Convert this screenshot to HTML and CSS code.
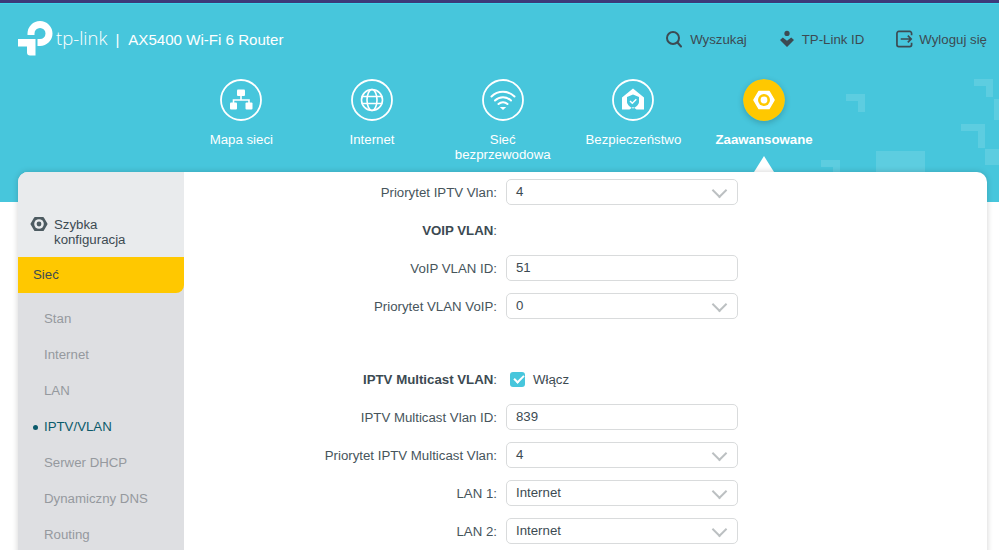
FILE: index.html
```html
<!DOCTYPE html>
<html lang="pl">
<head>
    <meta charset="UTF-8">
    <meta name="viewport" content="width=device-width, initial-scale=1.0">
    <title>AX5400 Wi-Fi 6 Router</title>
    <link rel="stylesheet" href="styles.css">
</head>
<body>
    <div class="page">
        <header class="header">
            <svg class="pixels" width="999" height="199" viewBox="0 3 999 199">
                <path d="M846 94h19v18h-7v-11h-12z"/>
                <path d="M974 79h19v18h-7v-11h-12z"/>
                <path d="M961 124h24v24h-7v-17h-17z"/>
                <path d="M994 99h5v21h-5z"/>
                <path d="M985 149h14v16h-14z"/>
                <path d="M876 151h49v21h-49z"/>
                <path d="M821 160h19v12h-7v-5h-12z"/>
            </svg>

            <div class="topline">
                <div class="brand">
                    <svg class="logo" width="35" height="35" viewBox="0 0 35 35">
                        <path d="M13 14V12.500A9 9 0 1 1 22 21.500H19.500" fill="none" stroke="#fff" stroke-width="7"/>
                        <path d="M0 18H17.500V34.500H12a3 3 0 0 1-3-3V25.500H0z" fill="#fff"/>
                    </svg>
                    <span class="brand-name">tp-link</span>
                    <span class="brand-sep">|</span>
                    <span class="brand-model">AX5400 Wi-Fi 6 Router</span>
                </div>
                <div class="actions">
                    <a class="action action-search">
                        <svg width="16" height="18" viewBox="0 0 16 18" fill="none" stroke="#3c4a52" stroke-width="2">
                            <circle cx="7" cy="8" r="6"/>
                            <path d="M11.500 12.500l3.500 4" stroke-linecap="round"/>
                        </svg>
                        Wyszukaj
                    </a>
                    <a class="action action-id">
                        <svg width="14" height="18" viewBox="0 0 15 18" fill="#3c4a52">
                            <circle cx="7.500" cy="3" r="2.800"/>
                            <path d="M0 10l3-2.500 4.500 3.500L12 7.500l3 2.500-7.500 7.500z"/>
                        </svg>
                        TP-Link ID
                    </a>
                    <a class="action action-logout">
                        <svg width="17" height="18" viewBox="0 0 18 18" fill="none" stroke="#3c4a52" stroke-width="1.800">
                            <path d="M16.500 5V3a2 2 0 0 0-2-2H3a2 2 0 0 0-2 2v12a2 2 0 0 0 2 2h11.500a2 2 0 0 0 2-2v-2"/>
                            <path d="M5 9h11M12.500 5.500L16 9l-3.500 3.500"/>
                        </svg>
                        Wyloguj się
                    </a>
                </div>
            </div>

            <nav class="nav">
                <a class="nav-item">
                    <svg class="nav-icon" width="42" height="42" viewBox="0 0 42 42">
                        <circle class="ring" cx="21" cy="21" r="20"/>
                        <path class="line" d="M21 16v5M13.500 24v-3h15.500v3"/>
                        <rect class="solid" x="17" y="10.500" width="8" height="6.500" rx="1"/>
                        <rect class="solid" x="10" y="23.500" width="7" height="7" rx="1"/>
                        <rect class="solid" x="25.500" y="23.500" width="7" height="7" rx="1"/>
                    </svg>
                    <span class="nav-label">Mapa sieci</span>
                </a>
                <a class="nav-item">
                    <svg class="nav-icon" width="42" height="42" viewBox="0 0 42 42">
                        <circle class="ring" cx="21" cy="21" r="20"/>
                        <circle class="line" cx="21" cy="21" r="10.500"/>
                        <ellipse class="line" cx="21" cy="21" rx="5" ry="10.500"/>
                        <path class="line" d="M10.500 17.500h21M10.500 24.500h21"/>
                    </svg>
                    <span class="nav-label">Internet</span>
                </a>
                <a class="nav-item">
                    <svg class="nav-icon" width="42" height="42" viewBox="0 0 42 42">
                        <circle class="ring" cx="21" cy="21" r="20"/>
                        <path class="line line-round" d="M9.500 17.500a16.500 16.500 0 0 1 23 0M13 21.500a11.500 11.500 0 0 1 16 0M16.500 25a6.500 6.500 0 0 1 9 0"/>
                        <path class="solid" d="M17.800 28h6.400L21 31z"/>
                    </svg>
                    <span class="nav-label">Sieć bezprzewodowa</span>
                </a>
                <a class="nav-item">
                    <svg class="nav-icon" width="42" height="42" viewBox="0 0 42 42">
                        <circle class="ring" cx="21" cy="21" r="20"/>
                        <path class="solid" fill-rule="evenodd" d="M21 9.500L32 18.500v12h-7.500L21 28l-3.500 2.500H10v-12zM15 18v5c0 2.500 3 5 6 6.500 3-1.500 6-4 6-6.500v-5l-6-2.500z"/>
                        <path class="check" d="M18 22l2.300 2.300 4-4"/>
                    </svg>
                    <span class="nav-label">Bezpieczeństwo</span>
                </a>
                <a class="nav-item nav-item-active">
                    <svg class="nav-icon" width="42" height="42" viewBox="0 0 42 42">
                        <circle class="disc" cx="21" cy="21" r="21"/>
                        <circle class="solid" cx="21" cy="21" r="9"/>
                        <path class="solid knob" d="M11 21L16 12.500H26L31 21L26 29.500H16Z"/>
                        <circle class="hole" cx="21" cy="21" r="6"/>
                        <circle class="solid" cx="21" cy="21" r="3.400"/>
                    </svg>
                    <span class="nav-label">Zaawansowane</span>
                </a>
            </nav>
        </header>

        <main class="card">
            <aside class="sidebar">
                <div class="quick">
                    <svg width="18" height="18" viewBox="0 0 18 18">
                        <path d="M1.500 9L5 3H13L16.500 9L13 15H5Z" fill="#4d5b61" stroke="#4d5b61" stroke-width="2" stroke-linejoin="round"/>
                        <circle cx="9" cy="9" r="4.800" fill="#e9ebed"/>
                        <circle cx="9" cy="9" r="2.400" fill="#4d5b61"/>
                    </svg>
                    <span>Szybka konfiguracja</span>
                </div>
                <div class="section-active">Sieć</div>
                <ul class="menu">
                    <li>Stan</li>
                    <li>Internet</li>
                    <li>LAN</li>
                    <li class="menu-current">IPTV/VLAN</li>
                    <li>Serwer DHCP</li>
                    <li>Dynamiczny DNS</li>
                    <li>Routing</li>
                </ul>
            </aside>

            <section class="form">
                <div class="row">
                    <label>Priorytet IPTV Vlan:</label>
                    <div class="field select">4</div>
                </div>
                <div class="row">
                    <label><strong>VOIP VLAN</strong>:</label>
                </div>
                <div class="row">
                    <label>VoIP VLAN ID:</label>
                    <div class="field">51</div>
                </div>
                <div class="row">
                    <label>Priorytet VLAN VoIP:</label>
                    <div class="field select">0</div>
                </div>
                <div class="row row-spaced">
                    <label><strong>IPTV Multicast VLAN</strong>:</label>
                    <div class="toggle">
                        <span class="checkbox"></span>
                        Włącz
                    </div>
                </div>
                <div class="row">
                    <label>IPTV Multicast Vlan ID:</label>
                    <div class="field">839</div>
                </div>
                <div class="row">
                    <label>Priorytet IPTV Multicast Vlan:</label>
                    <div class="field select">4</div>
                </div>
                <div class="row">
                    <label>LAN 1:</label>
                    <div class="field select">Internet</div>
                </div>
                <div class="row">
                    <label>LAN 2:</label>
                    <div class="field select">Internet</div>
                </div>
            </section>
        </main>
    </div>
</body>
</html>
```

FILE: styles.css
```css
:root {
    --teal: #47c6dc;
    --yellow: #ffc800;
    --text: #46545b;
    --dark: #3c4a52;
    --border: #d9dbdc;
}

* {
    margin: 0;
    padding: 0;
    box-sizing: border-box;
}

html, body {
    height: 100%;
    overflow: hidden;
}

body {
    font-family: "Liberation Sans", Arial, sans-serif;
    font-size: 13.25px;
    color: var(--text);
    background-color: #fff;
}

.page {
    height: 550px;
    overflow: hidden;
}

/* Header */
.header {
    position: relative;
    height: 202px;
    padding-top: 3px;
    background-color: var(--teal);
    border-top: 3px solid #3d3a7a;
    box-shadow: inset 0 1px 0 #3fd6ec;
}

.pixels {
    position: absolute;
    top: 0;
    left: 0;
    fill: rgba(255, 255, 255, 0.12);
}

.topline {
    position: relative;
    display: flex;
    justify-content: space-between;
    align-items: center;
    height: 56px;
    padding: 0 12px 0 18px;
    margin-top: 5px;
}

.brand {
    display: flex;
    align-items: center;
    color: #fff;
}

.logo {
    margin-bottom: 2px;
}

.brand-name {
    margin-left: 3px;
    margin-bottom: 3px;
    font-family: "Open Sans", sans-serif;
    font-size: 18.5px;
    font-weight: 300;
}

.brand-sep {
    margin-left: 8px;
    font-size: 15px;
}

.brand-model {
    margin-left: 9px;
    font-size: 15.100px;
}

.actions {
    display: flex;
    align-items: center;
}

.action {
    display: flex;
    align-items: center;
    gap: 8px;
    color: var(--dark);
}

.action-id {
    margin-left: 33px;
}

.action-logout {
    margin-left: 32px;
    gap: 6px;
}

.nav {
    position: relative;
    display: flex;
    padding-left: 176px;
    margin-top: 12px;
}

.nav-item {
    position: relative;
    display: flex;
    flex-direction: column;
    align-items: center;
    width: 130.700px;
    color: #fff;
    text-align: center;
}

.nav-icon {
    margin-bottom: 11px;
}

.nav-label {
    width: 120px;
    line-height: 15px;
}

.nav-item-active .nav-label {
    font-weight: bold;
}

.nav-item-active::after {
    content: "";
    position: absolute;
    top: 77px;
    left: 55px;
    border-left: 10px solid transparent;
    border-right: 10px solid transparent;
    border-bottom: 16px solid #fff;
}

.nav-icon .ring {
    fill: none;
    stroke: #fff;
    stroke-width: 1.800;
}

.nav-icon .line {
    fill: none;
    stroke: #fff;
    stroke-width: 1.600;
}

.nav-icon .line-round {
    stroke-width: 2;
    stroke-linecap: round;
}

.nav-icon .solid {
    fill: #fff;
}

.nav-icon .knob {
    stroke: #fff;
    stroke-width: 1.500;
    stroke-linejoin: round;
}

.nav-icon .check {
    fill: none;
    stroke: #fff;
    stroke-width: 1.500;
}

.nav-icon .disc,
.nav-icon .hole {
    fill: var(--yellow);
}

.nav-item-active .nav-icon {
    border-radius: 50%;
    box-shadow: 0 2px 6px rgba(0, 0, 0, 0.2);
}

/* Card */
.card {
    position: relative;
    display: flex;
    height: 400px;
    margin: -30px 12px 0 18px;
    overflow: hidden;
    background-color: #fff;
    border-radius: 10px 10px 0 0;
    box-shadow: 0 0 6px rgba(0, 0, 0, 0.18);
}

.sidebar {
    flex: none;
    width: 166px;
    background-color: #dedfe2;
}

.quick {
    display: flex;
    align-items: flex-start;
    gap: 6px;
    height: 85px;
    padding: 45px 10px 0 12px;
    line-height: 15px;
    color: var(--dark);
    background-color: #e9ebed;
}

.quick span {
    width: 90px;
}

.quick svg {
    flex: none;
    margin-top: -2px;
}

.section-active {
    height: 36px;
    padding-left: 15px;
    line-height: 35px;
    color: var(--dark);
    background-color: var(--yellow);
    border-radius: 0 0 8px 0;
}

.menu {
    padding-top: 8px;
    list-style: none;
}

.menu li {
    position: relative;
    height: 36px;
    padding-left: 26px;
    line-height: 36px;
    color: #95999e;
}

.menu .menu-current {
    color: #0b5a6b;
}

.menu-current::before {
    content: "";
    position: absolute;
    top: 16px;
    left: 15px;
    width: 5px;
    height: 5px;
    background-color: #0b5a6b;
    border-radius: 50%;
}

/* Form */
.form {
    flex: 1;
    padding-top: 7px;
}

.row {
    display: flex;
    align-items: center;
    height: 26px;
    margin-bottom: 12px;
}

.row-spaced {
    margin-top: 47px;
}

.row-spaced label {
    padding-top: 1px;
}

.row label {
    flex: none;
    width: 313px;
    text-align: right;
}

.row strong {
    color: var(--dark);
}

.field {
    position: relative;
    width: 232px;
    height: 26px;
    margin-left: 9px;
    padding-left: 9px;
    line-height: 24px;
    color: var(--dark);
    border: 1px solid var(--border);
    border-radius: 5px;
}

.select::after {
    content: "";
    position: absolute;
    top: 5px;
    right: 12px;
    width: 9px;
    height: 9px;
    border-right: 2px solid #bcc0c2;
    border-bottom: 2px solid #bcc0c2;
    transform: rotate(45deg);
}

.toggle {
    display: flex;
    align-items: center;
    gap: 8px;
    margin-left: 13px;
    margin-top: 1px;
    color: var(--dark);
}

.checkbox {
    position: relative;
    width: 15px;
    height: 15px;
    background-color: var(--teal);
    border-radius: 3px;
}

.checkbox::after {
    content: "";
    position: absolute;
    top: 3px;
    left: 3.500px;
    width: 8px;
    height: 4px;
    border-left: 2px solid #fff;
    border-bottom: 2px solid #fff;
    transform: rotate(-45deg);
}
```
